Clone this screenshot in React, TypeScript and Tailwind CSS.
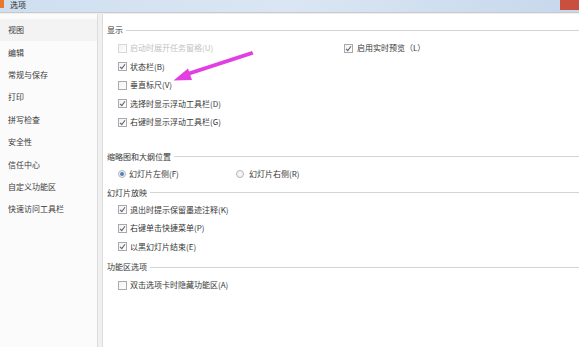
import React from 'react';

const font = { fontFamily: '"Noto Sans CJK SC", "Noto Sans", sans-serif' };

const sidebarItems = ['视图', '编辑', '常规与保存', '打印', '拼写检查', '安全性', '信任中心', '自定义功能区', '快速访问工具栏'];

function Check({ checked, disabled }: { checked?: boolean; disabled?: boolean }) {
  return (
    <span
      className={`flex h-[9px] w-[9px] shrink-0 items-center justify-center border bg-gradient-to-br from-[#f2f2f2] to-white ${
        disabled ? 'border-[#d8d8d8]' : 'border-[#a9a9a9]'
      }`}
    >
      {checked && (
        <svg width="7" height="7" viewBox="0 0 7 7">
          <path d="M1 3.8 L2.8 5.6 L6 1.2" fill="none" stroke="#5a6478" strokeWidth="1.1" />
        </svg>
      )}
    </span>
  );
}

function Radio({ checked }: { checked?: boolean }) {
  return (
    <span className="flex h-[8px] w-[8px] shrink-0 items-center justify-center rounded-full border border-[#b5b5b5] bg-[#f4f4f4]">
      {checked && <span className="h-[4px] w-[4px] rounded-full bg-[#4f7fc0]" />}
    </span>
  );
}

function Row({ label, checked, disabled }: { label: string; checked?: boolean; disabled?: boolean }) {
  return (
    <div className="flex h-[18.5px] items-center gap-[3px] pl-[11px]">
      <Check checked={checked} disabled={disabled} />
      <span className={disabled ? 'text-[#c2c2c2]' : 'text-[#363636]'}>{label}</span>
    </div>
  );
}

function Header({ title, className }: { title: string; className?: string }) {
  return (
    <div className={`flex h-[14px] items-center ${className ?? ''}`}>
      <span className="text-[#363636]">{title}</span>
      <span className="ml-[3px] h-px flex-1 bg-[#d4d4d4]" />
    </div>
  );
}

export default function App() {
  return (
    <div className="relative h-[347px] w-[579px] overflow-hidden bg-white text-[8px] leading-none" style={font}>
      {/* title bar */}
      <div className="flex h-[12px] items-start bg-gradient-to-r from-[#cfdff0] via-[#dae6f3] to-[#c6d8ec]">
        <span className="h-[8px] w-[4px] bg-[#e8792c]" />
        <span className="ml-[6px] leading-[10px] text-[#2a2a2a]">选项</span>
        <span className="flex-1" />
        <span className="h-[10px] w-[19px] bg-[#c9503f]" />
      </div>
      <div className="h-[2px] border-t border-[#c9c9c9] bg-[#efefef]" />

      <div className="flex h-[333px]">
        {/* sidebar */}
        <div className="flex w-[97px] flex-col bg-[#fbfbfb] pt-[5px]">
          {sidebarItems.map((item, i) => (
            <div
              key={item}
              className={`flex h-[22.4px] items-center pl-[8px] text-[#3a3a3a] ${i === 0 ? 'bg-[#f3f3f3]' : ''}`}
            >
              {item}
            </div>
          ))}
        </div>
        {/* divider */}
        <div className="w-[6px] border-x border-[#dcdcdc] bg-[#f0f0f0]" />

        {/* content */}
        <div className="flex flex-1 flex-col pl-[4px] pt-[9px]">
          <Header title="显示" />
          <div className="mt-[2px] flex">
            <div className="w-[237px]">
              <Row label="启动时展开任务窗格(U)" disabled />
            </div>
            <div className="flex h-[18.5px] items-center gap-[4px]">
              <Check checked />
              <span className="text-[#363636]">启用实时预览（L）</span>
            </div>
          </div>
          <Row label="状态栏(B)" checked />
          <Row label="垂直标尺(V)" />
          <Row label="选择时显示浮动工具栏(D)" checked />
          <Row label="右键时显示浮动工具栏(G)" checked />

          <Header title="缩略图和大纲位置" className="mt-[18px]" />
          <div className="mt-[1px] flex h-[18px] items-center pl-[11px]">
            <div className="flex w-[118px] items-center gap-[3px]">
              <Radio checked />
              <span className="text-[#363636]">幻灯片左侧(F)</span>
            </div>
            <div className="flex items-center gap-[5px]">
              <Radio />
              <span className="text-[#363636]">幻灯片右侧(R)</span>
            </div>
          </div>

          <Header title="幻灯片放映" className="mt-[3px]" />
          <div className="mt-[1px]">
            <Row label="退出时提示保留墨迹注释(K)" checked />
            <Row label="右键单击快捷菜单(P)" checked />
            <Row label="以黑幻灯片结束(E)" checked />
          </div>

          <Header title="功能区选项" className="mt-[4px]" />
          <div className="mt-[2px]">
            <Row label="双击选项卡时隐藏功能区(A)" />
          </div>
        </div>
      </div>

      {/* annotation arrow */}
      <svg className="pointer-events-none absolute left-0 top-0" width="579" height="347" viewBox="0 0 579 347">
        <polygon points="252,51 253.5,54.5 186,76.5 184.5,73" fill="#e33fe0" />
        <polygon points="173.5,80.5 188,68.5 192,80" fill="#e33fe0" />
      </svg>
    </div>
  );
}
